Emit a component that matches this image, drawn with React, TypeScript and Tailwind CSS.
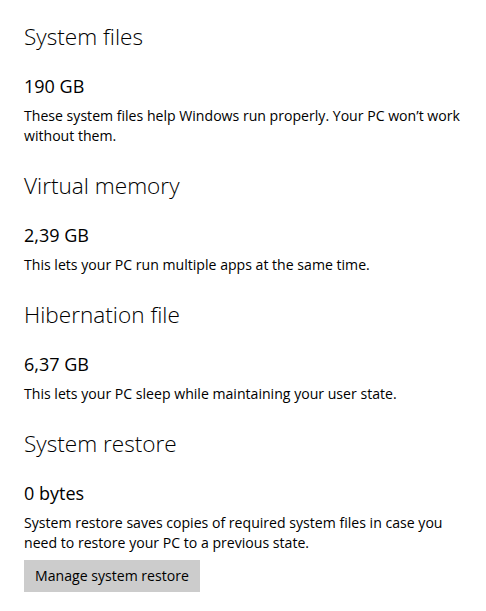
import React from "react";

type Section = { title: string; value: string; desc: string; button?: string };

const sections: Section[] = [
  {
    title: "System files",
    value: "190 GB",
    desc: "These system files help Windows run properly. Your PC won\u2019t work without them.",
  },
  {
    title: "Virtual memory",
    value: "2,39 GB",
    desc: "This lets your PC run multiple apps at the same time.",
  },
  {
    title: "Hibernation file",
    value: "6,37 GB",
    desc: "This lets your PC sleep while maintaining your user state.",
  },
  {
    title: "System restore",
    value: "0 bytes",
    desc: "System restore saves copies of required system files in case you need to restore your PC to a previous state.",
    button: "Manage system restore",
  },
];

export default function App() {
  return (
    <div
      className="w-[486px] h-[611px] bg-white text-black pl-6 pr-[12px] pt-[23px] flex flex-col gap-[26px] overflow-hidden"
      style={{ fontFamily: '"Open Sans", "Noto Sans", sans-serif' }}
    >
      {sections.map((s) => (
        <section key={s.title} className="flex flex-col">
          <h2 className="text-[22.6px] leading-[28px] font-light text-black">{s.title}</h2>
          <div className="mt-[23px] text-[18px] leading-[24px] font-[370] text-black">{s.value}</div>
          <p className="mt-2 text-[14.1px] leading-[20px] text-black">{s.desc}</p>
          {s.button && (
            <div className="mt-[7px]">
              <button className="h-8 px-[11px] bg-[#cccccc] text-[14.1px] text-black">
                {s.button}
              </button>
            </div>
          )}
        </section>
      ))}
    </div>
  );
}
